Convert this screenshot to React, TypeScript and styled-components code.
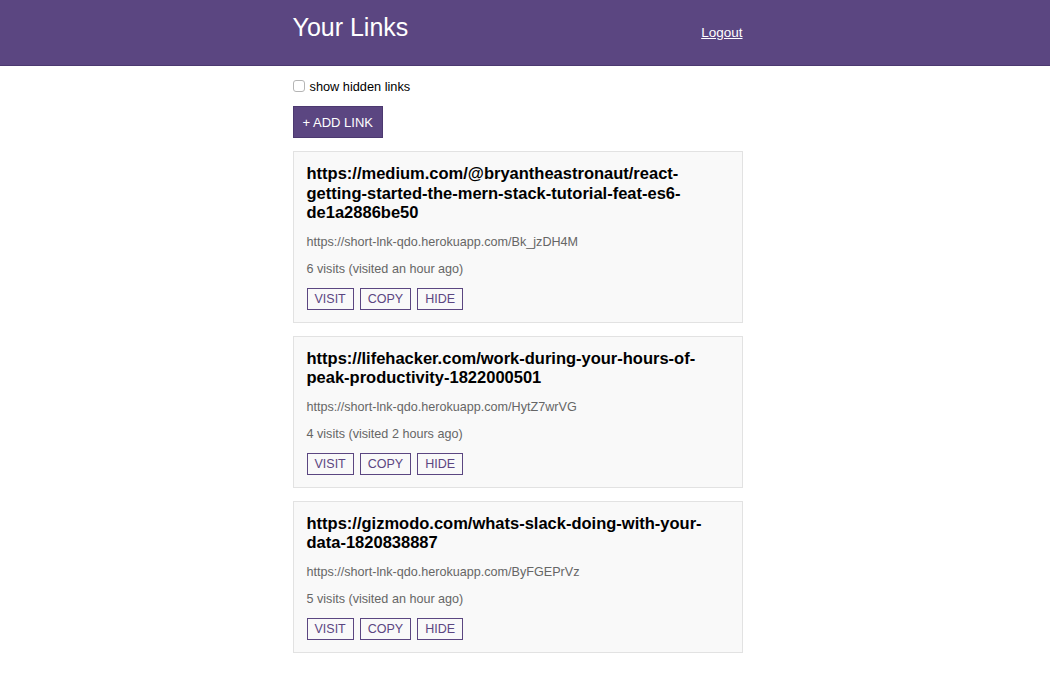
import React from "react";
import styled, { createGlobalStyle } from "styled-components";

const Global = createGlobalStyle`
  html, body { margin: 0; padding: 0; background: #fff; }
  body { font-family: "Liberation Sans", Arial, Helvetica, sans-serif; color: #000; }
  * { box-sizing: border-box; }
`;

const purple = "#5b4681";

const Header = styled.header`
  background: ${purple};
  border-bottom: 1px solid #4c3970;
  height: 66px;
  padding-right: 15px;
`;

const HeaderInner = styled.div`
  width: 450px;
  margin: 0 auto;
  display: flex;
  align-items: flex-start;
  justify-content: space-between;
`;

const Title = styled.h1`
  margin: 0;
  padding-top: 12px;
  font-size: 25px;
  font-weight: 300;
  color: #fff;
  line-height: 30px;
`;

const Logout = styled.a`
  margin-top: 25px;
  font-size: 13.5px;
  font-weight: 400;
  color: #fff;
  text-decoration: underline;
  cursor: pointer;
`;

const Page = styled.div`
  padding-right: 15px;
`;

const Main = styled.main`
  width: 450px;
  margin: 0 auto;
  padding-top: 13px;
  display: flex;
  flex-direction: column;
`;

const CheckLabel = styled.label`
  display: flex;
  align-items: center;
  gap: 5px;
  font-size: 12.75px;
  height: 14px;
  margin-bottom: 13px;
`;

const Box = styled.span`
  width: 12px;
  height: 12px;
  border: 1px solid #b5b5b5;
  border-radius: 3px;
  background: #fff;
  display: inline-block;
`;

const AddButton = styled.button`
  align-self: flex-start;
  height: 32px;
  padding: 0 9px;
  background: ${purple};
  border: 1px solid #4c3970;
  color: #fff;
  font-family: inherit;
  font-size: 13px;
  text-transform: uppercase;
  margin-bottom: 13px;
  cursor: pointer;
`;

const List = styled.div`
  display: flex;
  flex-direction: column;
  gap: 13px;
`;

const Card = styled.div`
  background: #f9f9f9;
  border: 1px solid #e2e2e2;
  padding: 12px 13px 12px;
`;

const LinkUrl = styled.h2`
  margin: 0;
  font-size: 16.5px;
  font-weight: 700;
  line-height: 19.5px;
  word-break: break-word;
`;

const Meta = styled.p<{ $top: number }>`
  margin: ${(p) => p.$top}px 0 0;
  font-size: 12.6px;
  color: #666;
  line-height: 16px;
`;

const Actions = styled.div`
  display: flex;
  gap: 6px;
  margin-top: 11px;
`;

const SmallButton = styled.button`
  height: 22px;
  padding: 0 7px;
  background: transparent;
  border: 1px solid ${purple};
  color: ${purple};
  font-family: inherit;
  font-size: 12.5px;
  text-transform: uppercase;
  cursor: pointer;
`;

const links = [
  {
    url: "https://medium.com/@bryantheastronaut/react-getting-started-the-mern-stack-tutorial-feat-es6-de1a2886be50",
    short: "https://short-lnk-qdo.herokuapp.com/Bk_jzDH4M",
    visits: "6 visits (visited an hour ago)",
  },
  {
    url: "https://lifehacker.com/work-during-your-hours-of-peak-productivity-1822000501",
    short: "https://short-lnk-qdo.herokuapp.com/HytZ7wrVG",
    visits: "4 visits (visited 2 hours ago)",
  },
  {
    url: "https://gizmodo.com/whats-slack-doing-with-your-data-1820838887",
    short: "https://short-lnk-qdo.herokuapp.com/ByFGEPrVz",
    visits: "5 visits (visited an hour ago)",
  },
];

export default function App() {
  return (
    <>
      <Global />
      <Header>
        <HeaderInner>
          <Title>Your Links</Title>
          <Logout>Logout</Logout>
        </HeaderInner>
      </Header>
      <Page>
        <Main>
          <CheckLabel>
            <Box />
            show hidden links
          </CheckLabel>
          <AddButton>+ Add Link</AddButton>
          <List>
            {links.map((l) => (
              <Card key={l.short}>
                <LinkUrl>{l.url}</LinkUrl>
                <Meta $top={11}>{l.short}</Meta>
                <Meta $top={11}>{l.visits}</Meta>
                <Actions>
                  <SmallButton>Visit</SmallButton>
                  <SmallButton>Copy</SmallButton>
                  <SmallButton>Hide</SmallButton>
                </Actions>
              </Card>
            ))}
          </List>
        </Main>
      </Page>
    </>
  );
}
